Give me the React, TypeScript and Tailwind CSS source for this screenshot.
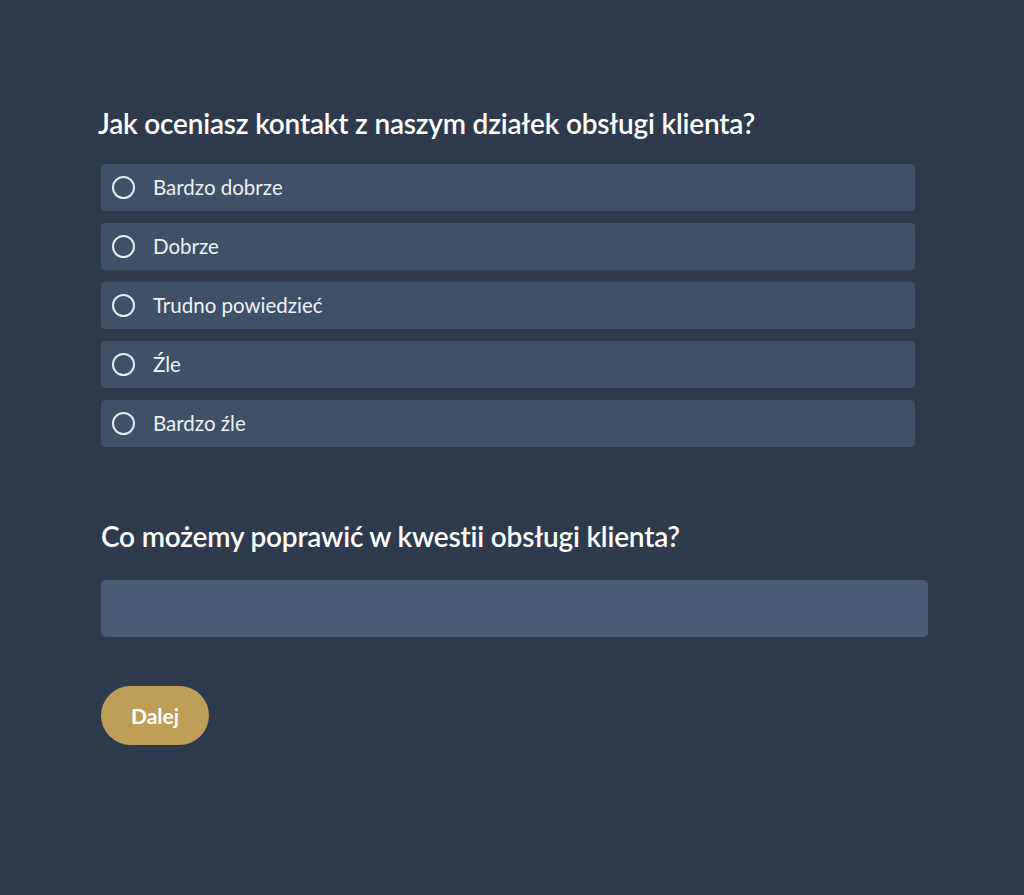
import React from "react";

const options = ["Bardzo dobrze", "Dobrze", "Trudno powiedzieć", "Źle", "Bardzo źle"];

export default function App() {
  return (
    <div
      className="min-h-[895px] w-full bg-[#2f3b4d] text-white"
      style={{ fontFamily: "Lato, 'Noto Sans', sans-serif" }}
    >
      <div className="pl-[98px] pt-[105px]">
        <h1 className="text-[28px] font-semibold leading-[36px] tracking-[-0.2px]">
          Jak oceniasz kontakt z naszym działek obsługi klienta?
        </h1>
        <div className="mt-[23px] flex w-[817px] flex-col gap-[12px] pl-[3px]">
          {options.map((o) => (
            <label
              key={o}
              className="flex h-[47px] items-center rounded-[4px] bg-[#3f5068] pl-[11px]"
            >
              <span className="h-[23px] w-[23px] shrink-0 rounded-full border-2 border-[#e6e9ee]" />
              <span className="ml-[18px] text-[20.5px] text-[#eef0f3]">{o}</span>
            </label>
          ))}
        </div>
        <h2 className="mt-[71px] pl-[3px] text-[28px] font-semibold leading-[36px] tracking-[-0.2px]">
          Co możemy poprawić w kwestii obsługi klienta?
        </h2>
        <div className="mt-[26px] ml-[3px] h-[57px] w-[827px] rounded-[5px] bg-[#475b75]" />
        <button className="mt-[49px] ml-[3px] flex h-[59px] w-[108px] items-center justify-center rounded-full bg-[#be9d56] text-[21px] font-bold text-white">
          Dalej
        </button>
      </div>
    </div>
  );
}
